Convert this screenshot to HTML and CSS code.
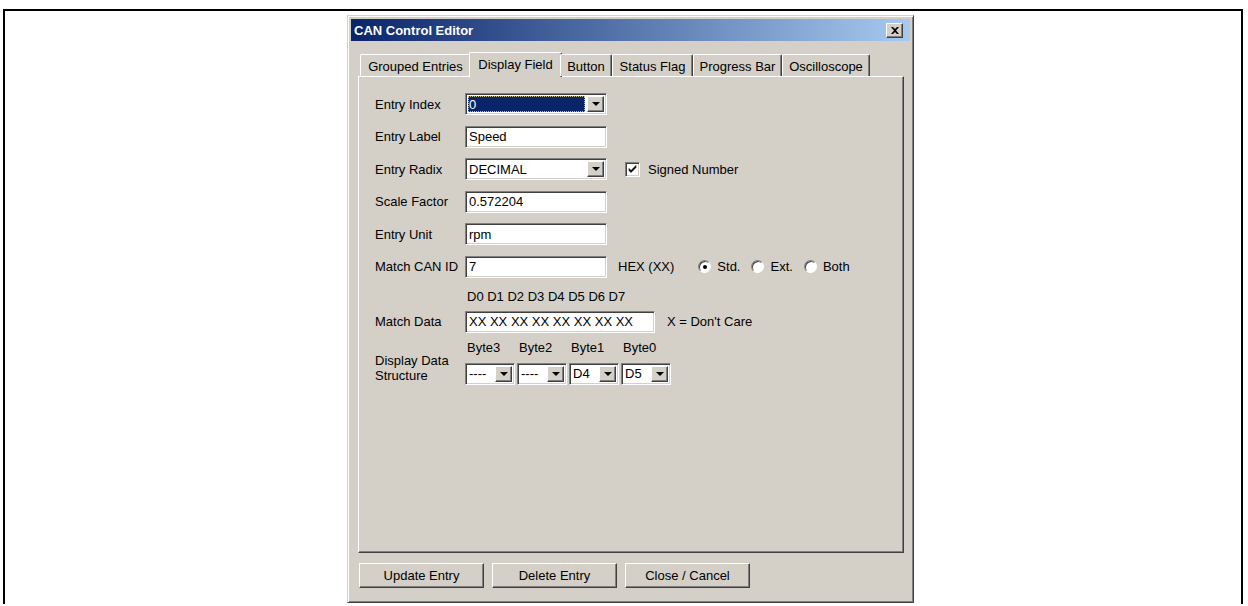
FILE: index.html
```html
<!DOCTYPE html>
<html>
<head>
<meta charset="utf-8">
<title>CAN Control Editor</title>
<link rel="stylesheet" href="styles.css">
</head>
<body>
<div class="page">
  <div class="dialog">
    <div class="titlebar">
      <span class="title">CAN Control Editor</span>
      <span class="close raised">
        <svg width="8" height="7" viewBox="0 0 8 7"><path d="M0 0h2l2 2l2-2h2l-3 3.5l3 3.5h-2l-2-2l-2 2h-2l3-3.5z" fill="#000"/></svg>
      </span>
    </div>
    <div class="dlgbody">
      <div class="tabs">
        <div class="tab w-grouped">Grouped Entries</div>
        <div class="tab tab-active w-display">Display Field</div>
        <div class="tab w-button">Button</div>
        <div class="tab w-status">Status Flag</div>
        <div class="tab w-progress">Progress Bar</div>
        <div class="tab w-osc">Oscilloscope</div>
      </div>
      <div class="panel">
        <div class="form">
          <div class="row">
            <span class="label">Entry Index</span>
            <span class="combo sunken w-field">
              <span class="combo-text focus">0</span>
              <span class="drop raised"><i class="arrow"></i></span>
            </span>
          </div>
          <div class="row">
            <span class="label">Entry Label</span>
            <span class="edit sunken w-field">Speed</span>
          </div>
          <div class="row">
            <span class="label">Entry Radix</span>
            <span class="combo sunken w-field">
              <span class="combo-text">DECIMAL</span>
              <span class="drop raised"><i class="arrow"></i></span>
            </span>
            <span class="check-wrap">
              <span class="checkbox">
                <svg width="9" height="9" viewBox="0 0 9 9"><path d="M1 3.5l2 2l5-5v2l-5 5l-2-2z" fill="#000" stroke="#000" stroke-width="0.6"/></svg>
              </span>
              Signed Number
            </span>
          </div>
          <div class="row">
            <span class="label">Scale Factor</span>
            <span class="edit sunken w-field">0.572204</span>
          </div>
          <div class="row">
            <span class="label">Entry Unit</span>
            <span class="edit sunken w-field">rpm</span>
          </div>
          <div class="row">
            <span class="label">Match CAN ID</span>
            <span class="edit sunken w-field">7</span>
            <span class="hex">HEX (<span class="xx">XX</span>)</span>
            <span class="radio-wrap"><span class="radio on"></span>Std.</span>
            <span class="radio-wrap"><span class="radio"></span>Ext.</span>
            <span class="radio-wrap"><span class="radio"></span>Both</span>
          </div>
          <div class="datahead">D0 D1 D2 D3 D4 D5 D6 D7</div>
          <div class="row row-data">
            <span class="label">Match Data</span>
            <span class="edit sunken w-data"><span class="xx">XX XX XX XX XX XX XX XX</span></span>
            <span class="care">X = Don't Care</span>
          </div>
          <div class="struct">
            <span class="label label-2">Display Data<br>Structure</span>
            <div class="bytes">
              <div class="byte-col">
                <span class="byte-name">Byte3</span>
                <span class="combo sunken w-byte">
                  <span class="combo-text">----</span>
                  <span class="drop raised"><i class="arrow"></i></span>
                </span>
              </div>
              <div class="byte-col">
                <span class="byte-name">Byte2</span>
                <span class="combo sunken w-byte">
                  <span class="combo-text">----</span>
                  <span class="drop raised"><i class="arrow"></i></span>
                </span>
              </div>
              <div class="byte-col">
                <span class="byte-name">Byte1</span>
                <span class="combo sunken w-byte">
                  <span class="combo-text">D4</span>
                  <span class="drop raised"><i class="arrow"></i></span>
                </span>
              </div>
              <div class="byte-col">
                <span class="byte-name">Byte0</span>
                <span class="combo sunken w-byte">
                  <span class="combo-text">D5</span>
                  <span class="drop raised"><i class="arrow"></i></span>
                </span>
              </div>
            </div>
          </div>
        </div>
      </div>
      <div class="buttons">
        <span class="btn raised">Update Entry</span>
        <span class="btn raised">Delete Entry</span>
        <span class="btn raised">Close / Cancel</span>
      </div>
    </div>
  </div>
</div>
</body>
</html>
```

FILE: styles.css
```css
html, body {
  margin: 0;
  padding: 0;
  background: #fff;
}

body {
  font-family: "Liberation Sans", Arial, sans-serif;
  font-size: 13px;
  color: #000;
}

/* outer black frame around the page */
.page {
  margin: 9px 0 0 3px;
  width: 1240px;
  height: 595px;
  border: 2px solid #000;
  border-bottom: 0;
  padding-top: 4px;
  box-sizing: border-box;
  overflow: hidden;
}

/* classic window */
.dialog {
  margin-left: 342px;
  width: 567px;
  height: 588px;
  box-sizing: border-box;
  background: #d4d0c8;
  border: 1px solid;
  border-color: #d4d0c8 #404040 #404040 #d4d0c8;
  box-shadow: inset 1px 1px #fff, inset -1px -1px #808080;
  padding: 3px;
}

.titlebar {
  height: 22px;
  display: flex;
  align-items: center;
  justify-content: space-between;
  background: linear-gradient(to right, #0a246a, #a6caf0);
  padding: 0 7px 0 3px;
}

.title {
  color: #fff;
  font-weight: bold;
  font-size: 13px;
}

.raised {
  background: #d4d0c8;
  border: 1px solid;
  border-color: #fff #404040 #404040 #fff;
  box-shadow: inset -1px -1px #808080;
  box-sizing: border-box;
}

.sunken {
  background: #fff;
  border: 1px solid;
  border-color: #808080 #fff #fff #808080;
  box-shadow: inset 1px 1px #404040, inset -1px -1px #d4d0c8;
  box-sizing: border-box;
}

.close {
  width: 17px;
  height: 15px;
  display: flex;
  align-items: center;
  justify-content: center;
}

.dlgbody {
  padding: 11px 6px 0 7px;
}

/* tab strip */
.tabs {
  height: 24px;
  display: flex;
  align-items: flex-end;
  padding-left: 2px;
  position: relative;
  z-index: 1;
}

.tab {
  height: 22px;
  box-sizing: border-box;
  border-top: 1px solid #fff;
  border-left: 1px solid #fff;
  border-right: 1px solid #404040;
  box-shadow: inset -1px 0 #808080;
  border-radius: 2px 2px 0 0;
  display: flex;
  align-items: center;
  justify-content: center;
  padding-top: 1px;
  background: #d4d0c8;
}

.tab-active {
  height: 25px;
  margin: 0 -2px -1px;
  padding-bottom: 3px;
}

.w-grouped { width: 111px; }
.w-display { width: 93px; }
.w-button { width: 52px; }
.w-status { width: 81px; }
.w-progress { width: 89px; }
.w-osc { width: 88px; }

.panel {
  height: 477px;
  box-sizing: border-box;
  border: 1px solid;
  border-color: #fff #404040 #404040 #fff;
  box-shadow: inset -1px -1px #808080;
}

.form {
  padding: 16px 0 0 16px;
  display: flex;
  flex-direction: column;
}

.row {
  display: flex;
  align-items: center;
  height: 22px;
  margin-bottom: 10.6px;
}

.label {
  width: 90px;
  flex: none;
}

.w-field { width: 142px; }
.w-data { width: 190px; }
.w-byte { width: 50px; }

.edit {
  height: 22px;
  display: flex;
  align-items: center;
  padding-left: 3px;
}

.combo {
  height: 22px;
  display: flex;
  align-items: stretch;
  padding: 2px;
}

.combo-text {
  flex: 1;
  display: flex;
  align-items: center;
  padding-left: 1px;
  min-width: 0;
}

.combo-text.focus {
  background: #0a246a;
  color: #fff;
  outline: 1px dotted #c8c090;
  outline-offset: -1px;
  margin-right: 2px;
}

.drop {
  width: 17px;
  flex: none;
  display: flex;
  align-items: center;
  justify-content: center;
}

.arrow {
  width: 0;
  height: 0;
  border-left: 4px solid transparent;
  border-right: 4px solid transparent;
  border-top: 4px solid #000;
}

.check-wrap {
  display: flex;
  align-items: center;
  margin-left: 18px;
}

.checkbox {
  width: 15px;
  height: 15px;
  box-sizing: border-box;
  background: #fff;
  border: 1px solid;
  border-color: #808080 #fff #fff #808080;
  box-shadow: inset 1px 1px #404040, inset -1px -1px #d4d0c8;
  display: flex;
  align-items: center;
  justify-content: center;
  margin-right: 8px;
}

.hex {
  margin-left: 11px;
  margin-right: 24px;
}

.radio-wrap {
  display: flex;
  align-items: center;
  margin-right: 11px;
}

.radio {
  width: 13px;
  height: 13px;
  box-sizing: border-box;
  border-radius: 50%;
  background: #fff;
  border: 1px solid;
  border-color: #808080 #fff #fff #808080;
  box-shadow: inset 1px 1px #404040;
  margin-right: 6px;
  display: flex;
  align-items: center;
  justify-content: center;
}

.radio.on::after {
  content: "";
  width: 4px;
  height: 4px;
  border-radius: 50%;
  background: #000;
}

.datahead {
  margin: 0 0 6px 92px;
  line-height: 16px;
  height: 16px;
}

.row-data {
  margin-bottom: 7px;
}

.care {
  margin-left: 12px;
}

.struct {
  display: flex;
}

.label-2 {
  line-height: 15px;
  padding-top: 13px;
}

.bytes {
  display: flex;
  gap: 2px;
}

.byte-col {
  display: flex;
  flex-direction: column;
  gap: 7px;
}

.byte-name {
  line-height: 16px;
  padding-left: 2px;
}

.buttons {
  display: flex;
  gap: 8px;
  margin-top: 10px;
  padding-left: 1px;
}

.btn {
  width: 125px;
  height: 25px;
  display: flex;
  align-items: center;
  justify-content: center;
}
```
